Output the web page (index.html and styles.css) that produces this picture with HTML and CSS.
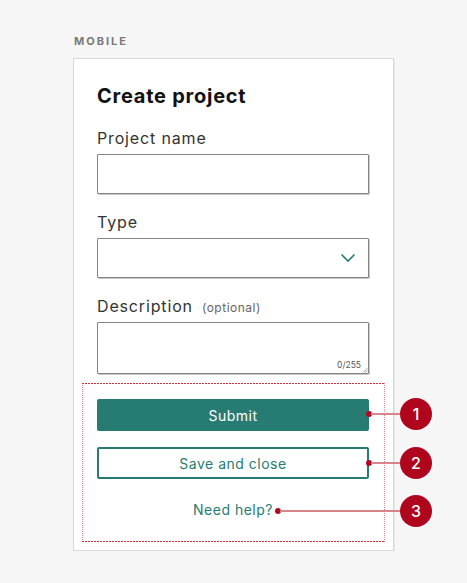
FILE: index.html
```html
<!DOCTYPE html>
<html>
<head>
<meta charset="utf-8">
<link rel="stylesheet" href="styles.css">
</head>
<body>
<div class="page">
  <div class="caption">MOBILE</div>
  <div class="card">
    <h1 class="title">Create project</h1>
    <div class="field">
      <label class="label">Project name</label>
      <div class="input"></div>
    </div>
    <div class="field">
      <label class="label">Type</label>
      <div class="input select">
        <svg class="chevron" width="16" height="10" viewBox="0 0 16 10"><path d="M1.5 1.5 L8 8 L14.5 1.5" fill="none" stroke="#267b73" stroke-width="1.6"/></svg>
      </div>
    </div>
    <div class="field">
      <label class="label">Description<span class="optional">(optional)</span></label>
      <div class="input textarea">
        <span class="counter">0/255</span>
        <svg class="grip" width="6" height="6" viewBox="0 0 6 6"><path d="M5.5 1 L1 5.5 M5.5 3.5 L3.5 5.5" stroke="#888" stroke-width="0.8"/></svg>
      </div>
    </div>
    <div class="actions">
      <button class="btn primary">Submit</button>
      <button class="btn secondary">Save and close</button>
      <a class="help">Need help?</a>

      <div class="anno a1"><span class="dot"></span><span class="line"></span><span class="num">1</span></div>
      <div class="anno a2"><span class="dot"></span><span class="line"></span><span class="num">2</span></div>
      <div class="anno a3"><span class="dot"></span><span class="line"></span><span class="num">3</span></div>
    </div>
  </div>
</div>
</body>
</html>
```

FILE: styles.css
```css
html, body {
  margin: 0;
  padding: 0;
  background: #f6f6f6;
}
body {
  font-family: "Inter", "Open Sans", sans-serif;
  color: #2e2e2e;
}
.page {
  padding: 34px 0 0 73px;
}
.caption {
  font-size: 11px;
  font-weight: 700;
  letter-spacing: 2px;
  color: #7a7a7a;
  line-height: 14px;
  padding-left: 1px;
  margin-bottom: 10px;
}
.card {
  width: 272px;
  height: 442px;
  background: #fff;
  border: 1px solid #d8d8d8;
  box-shadow: 1px 1px 0 #e8e8e8;
  padding: 25px 24px 24px 23px;
}
.title {
  margin: 0 0 20px 0;
  font-size: 20px;
  line-height: 24px;
  font-weight: 700;
  color: #111;
  letter-spacing: 0.75px;
}
.field {
  display: flex;
  flex-direction: column;
  gap: 6px;
  margin-bottom: 18px;
}
.field:nth-child(4) {
  margin-bottom: 0;
}
.label {
  display: flex;
  align-items: baseline;
  height: 20px;
  font-size: 16px;
  line-height: 20px;
  color: #333;
  letter-spacing: 0.85px;
}
.optional {
  font-size: 12px;
  line-height: 20px;
  color: #666;
  margin-left: 9px;
  letter-spacing: 0.5px;
}
.input {
  position: relative;
  height: 38px;
  border: 1px solid #858585;
  box-shadow: 1px 1px 0 #c8c8c8;
  border-radius: 1px;
  background: #fff;
}
.select {
  display: flex;
  align-items: center;
  justify-content: flex-end;
  padding-right: 12px;
}
.chevron {
  display: block;
}
.textarea {
  height: 50px;
}
.counter {
  position: absolute;
  right: 7px;
  bottom: 3px;
  font-size: 8.5px;
  line-height: 10px;
  color: #555;
}
.grip {
  position: absolute;
  right: 0;
  bottom: 0;
}
.actions {
  position: relative;
  margin: 9px -16px 0 -15px;
  padding: 16px 16px 22px 15px;
  display: flex;
  flex-direction: column;
  background-image:
    repeating-linear-gradient(to right, #d5333c 0 2px, transparent 2px 3px),
    repeating-linear-gradient(to right, #d5333c 0 2px, transparent 2px 3px),
    repeating-linear-gradient(to bottom, #e08a90 0 1px, transparent 1px 2px),
    repeating-linear-gradient(to bottom, #e08a90 0 1px, transparent 1px 2px);
  background-size: 100% 1px, 100% 1px, 1px 100%, 1px 100%;
  background-position: left top, left bottom, left top, right top;
  background-repeat: no-repeat;
}
.btn {
  font-family: inherit;
  font-size: 14px;
  letter-spacing: 0.5px;
  height: 32px;
  border-radius: 2px;
  width: 100%;
  cursor: pointer;
}
.primary {
  background: #267b73;
  color: #fff;
  border: none;
}
.secondary {
  margin-top: 16px;
  background: #fff;
  color: #267b73;
  border: 2px solid #267b73;
}
.help {
  margin-top: 21px;
  text-align: center;
  font-size: 14px;
  line-height: 20px;
  letter-spacing: 0.5px;
  color: #267b73;
}
.anno {
  position: absolute;
  height: 32px;
  display: flex;
  align-items: center;
}
.a1 { left: 284px; top: 15px; width: 66px; }
.a2 { left: 284px; top: 64px; width: 66px; }
.a3 { left: 193px; top: 112px; width: 157px; }
.dot {
  width: 6px;
  height: 6px;
  border-radius: 50%;
  background: #b00a20;
  margin-right: -1px;
  flex: none;
}
.line {
  height: 2px;
  background: #d8848b;
  flex: 1;
}
.num {
  width: 32px;
  height: 32px;
  border-radius: 50%;
  background: #b0061d;
  color: #fff;
  font-size: 16px;
  font-weight: 500;
  display: flex;
  align-items: center;
  justify-content: center;
  flex: none;
}
```
